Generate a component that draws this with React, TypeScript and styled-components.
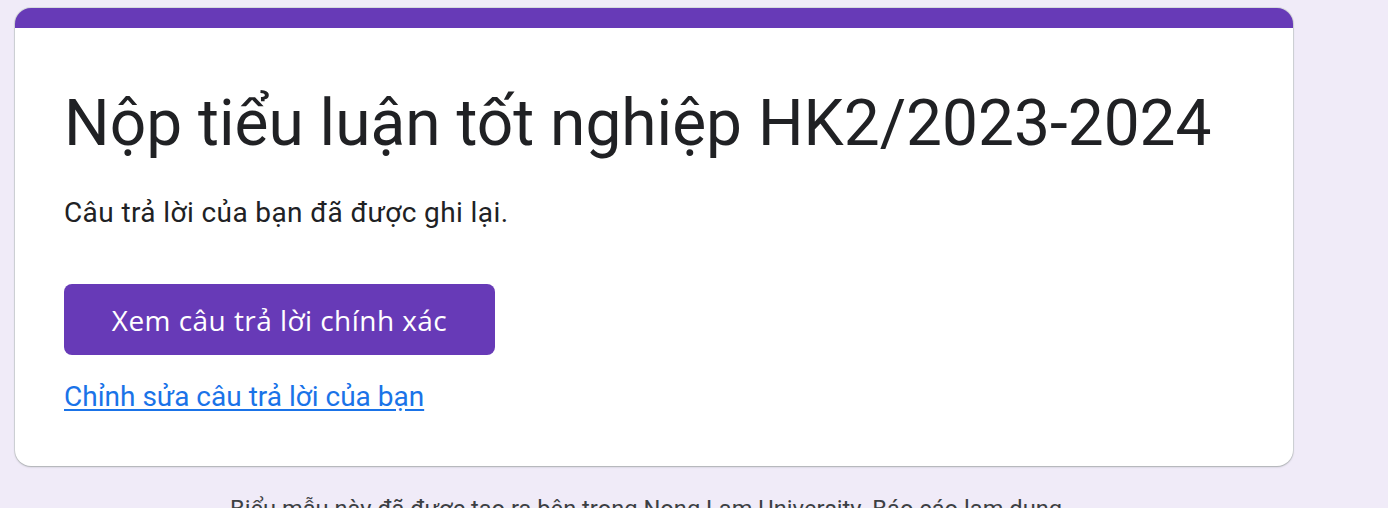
import React from "react";
import styled, { createGlobalStyle } from "styled-components";

const Global = createGlobalStyle`
  html, body { margin: 0; padding: 0; background: #f0ebf8; }
  body { font-family: Roboto, "Liberation Sans", Arial, sans-serif; color: #202124; }
`;

const Page = styled.div`
  width: 1388px;
  height: 508px;
  overflow: hidden;
  box-sizing: border-box;
  padding: 8px 95px 0 15px;
  background: #f0ebf8;
`;

const Card = styled.div`
  background: #fff;
  border-radius: 16px;
  border-top: 20px solid #673ab7;
  box-shadow: 0 1px 2px 0 rgba(60, 64, 67, 0.3), 0 0 0 1px #dadce0;
  padding: 56px 48px 49px 49px;
  display: flex;
  flex-direction: column;
  align-items: flex-start;
`;

const Title = styled.h1`
  margin: 0;
  font-family: Roboto, "Liberation Sans", sans-serif;
  font-weight: 400;
  font-size: 64px;
  line-height: 80px;
  color: #202124;
`;

const Message = styled.div`
  margin-top: 29px;
  font-size: 28px;
  line-height: 40px;
  letter-spacing: 0.4px;
  color: #202124;
`;

const PrimaryButton = styled.button`
  margin-top: 51px;
  width: 431px;
  height: 71px;
  border: none;
  border-radius: 8px;
  background: #673ab7;
  color: #fff;
  font-family: "Open Sans", "Noto Sans", sans-serif;
  font-weight: 500;
  font-size: 28px;
  letter-spacing: 0.45px;
  cursor: pointer;
`;

const EditLink = styled.a`
  margin-top: 22px;
  font-size: 28px;
  line-height: 40px;
  color: #1a73e8;
  text-decoration: underline;
  text-underline-offset: 3px;
`;

const Footer = styled.div`
  margin-top: 27px;
  padding-right: 16px;
  text-align: center;
  font-size: 23.7px;
  line-height: 32px;
  color: #3c4043;
`;

export default function App() {
  return (
    <>
      <Global />
      <Page>
        <Card>
          <Title>Nộp tiểu luận tốt nghiệp HK2/2023-2024</Title>
          <Message>Câu trả lời của bạn đã được ghi lại.</Message>
          <PrimaryButton>Xem câu trả lời chính xác</PrimaryButton>
          <EditLink href="#">Chỉnh sửa câu trả lời của bạn</EditLink>
        </Card>
        <Footer>
          Biểu mẫu này đã được tạo ra bên trong Nong Lam University. Báo cáo lạm dụng
        </Footer>
      </Page>
    </>
  );
}
